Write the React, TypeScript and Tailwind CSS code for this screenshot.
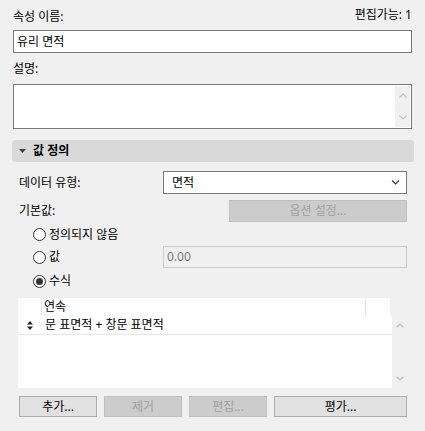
import React from "react";

function ChevronUp({ color = "#c2c2c2" }: { color?: string }) {
  return (
    <svg width="8" height="5" viewBox="0 0 8 5">
      <path d="M0.5 4.5 L4 1 L7.5 4.5" fill="none" stroke={color} strokeWidth="1.2" />
    </svg>
  );
}

function ChevronDown({ color = "#c2c2c2", w = 8 }: { color?: string; w?: number }) {
  return (
    <svg width={w} height="5" viewBox="0 0 8 5">
      <path d="M0.5 0.5 L4 4 L7.5 0.5" fill="none" stroke={color} strokeWidth="1.2" />
    </svg>
  );
}

function Radio({ checked, label }: { checked?: boolean; label: string }) {
  return (
    <div className="flex items-center">
      <span className="flex h-[13px] w-[13px] items-center justify-center rounded-full border border-[#333333] bg-white">
        {checked && <span className="h-[7px] w-[7px] rounded-full bg-[#333333]" />}
      </span>
      <span className="ml-[3px]">{label}</span>
    </div>
  );
}

function Btn({ label, disabled, w }: { label: string; disabled?: boolean; w: string }) {
  return (
    <div
      className={
        disabled
          ? `${w} flex h-[21px] items-center justify-center border border-[#bfbfbf] bg-[#cccccc] text-[#a0a0a0]`
          : `${w} flex h-[21px] items-center justify-center border border-[#adadad] bg-[#e1e1e1]`
      }
    >
      {label}
    </div>
  );
}

export default function App() {
  return (
    <div className="h-[431px] w-[425px] overflow-hidden bg-[#f0f0f0] px-[13px] pt-[8px] font-['Noto_Sans','Noto_Sans_CJK_KR',sans-serif] text-[12px] leading-[16px] text-black">
      {/* name */}
      <div className="flex h-[16px] items-start justify-between">
        <span className="mt-[1px]">속성 이름:</span>
        <span className="-mt-[1px]">편집가능: 1</span>
      </div>
      <div className="mt-[6px] flex h-[23px] items-center border border-[#7a7a7a] bg-white pl-[3px]">유리 면적</div>

      {/* description */}
      <div className="mt-[8px] h-[16px]">설명:</div>
      <div className="mt-[7px] flex h-[45px] justify-end border border-[#7a7a7a] bg-white p-[1px]">
        <div className="flex w-[15px] flex-col items-center justify-between bg-[#f0f0f0] py-[7px]">
          <ChevronUp />
          <ChevronDown />
        </div>
      </div>

      {/* section header */}
      <div className="-ml-[1px] mt-[11px] flex h-[22px] w-[402px] items-center rounded-[3px] bg-[#d9d9d9] pl-[7px] font-bold">
        <svg width="7" height="4" viewBox="0 0 7 4">
          <path d="M0 0 H7 L3.5 4 Z" fill="#404040" />
        </svg>
        <span className="ml-[7px]">값 정의</span>
      </div>

      <div className="pl-[6px] pr-[5px]">
        <div className="mt-[9px] flex h-[23px] items-center justify-between">
          <span>데이터 유형:</span>
          <div className="flex h-[23px] w-[244px] items-center justify-between border border-[#7a7a7a] bg-white pl-[8px] pr-[6px]">
            <span>면적</span>
            <ChevronDown color="#333333" w={9} />
          </div>
        </div>

        <div className="mt-[6px] flex h-[22px] items-center justify-between">
          <span>기본값:</span>
          <div className="flex h-[22px] w-[178px] items-center justify-center border border-[#bfbfbf] bg-[#cccccc] text-[#a0a0a0]">
            옵션 설정...
          </div>
        </div>

        <div className="mt-[4px] flex h-[17px] items-center pl-[14px]">
          <Radio label="정의되지 않음" />
        </div>

        <div className="mt-[3px] flex h-[22px] items-center justify-between pl-[14px]">
          <Radio label="값" />
          <div className="flex h-[22px] w-[244px] items-center border border-[#cccccc] bg-[#f0f0f0] pl-[3px] text-[#707a86]">
            0.00
          </div>
        </div>

        <div className="mt-[4px] flex h-[18px] items-center pl-[14px]">
          <Radio checked label="수식" />
        </div>
      </div>

      {/* formula table */}
      <div className="ml-[5px] mt-[8px] flex h-[90px] w-[389px]">
        <div className="flex w-[374px] flex-col">
          <div className="flex h-[18px] w-[372px] bg-white">
            <div className="w-[24px] border-r border-[#e3e3e3]" />
            <div className="flex w-[324px] items-center border-r border-[#e3e3e3] pl-[2px]">연속</div>
          </div>
          <div className="flex h-[19px] items-center border-b border-[#e8e8e8] bg-white">
            <div className="flex w-[24px] justify-center">
              <svg width="6" height="9" viewBox="0 0 6 9">
                <path d="M0 3.5 L3 0 L6 3.5 Z M0 5.5 L3 9 L6 5.5 Z" fill="#222222" />
              </svg>
            </div>
            <span className="pl-[3px]">문 표면적 + 창문 표면적</span>
          </div>
          <div className="flex-1 bg-white" />
        </div>
        <div className="flex w-[15px] flex-col items-center justify-between pb-[7px] pt-[25px]">
          <ChevronUp />
          <ChevronDown />
        </div>
      </div>

      {/* buttons */}
      <div className="ml-[6px] mt-[8px] flex gap-[7px]">
        <Btn label="추가..." w="w-[78px]" />
        <Btn label="제거" disabled w="w-[78px]" />
        <Btn label="편집..." disabled w="w-[78px]" />
        <Btn label="평가..." w="w-[133px]" />
      </div>
    </div>
  );
}
